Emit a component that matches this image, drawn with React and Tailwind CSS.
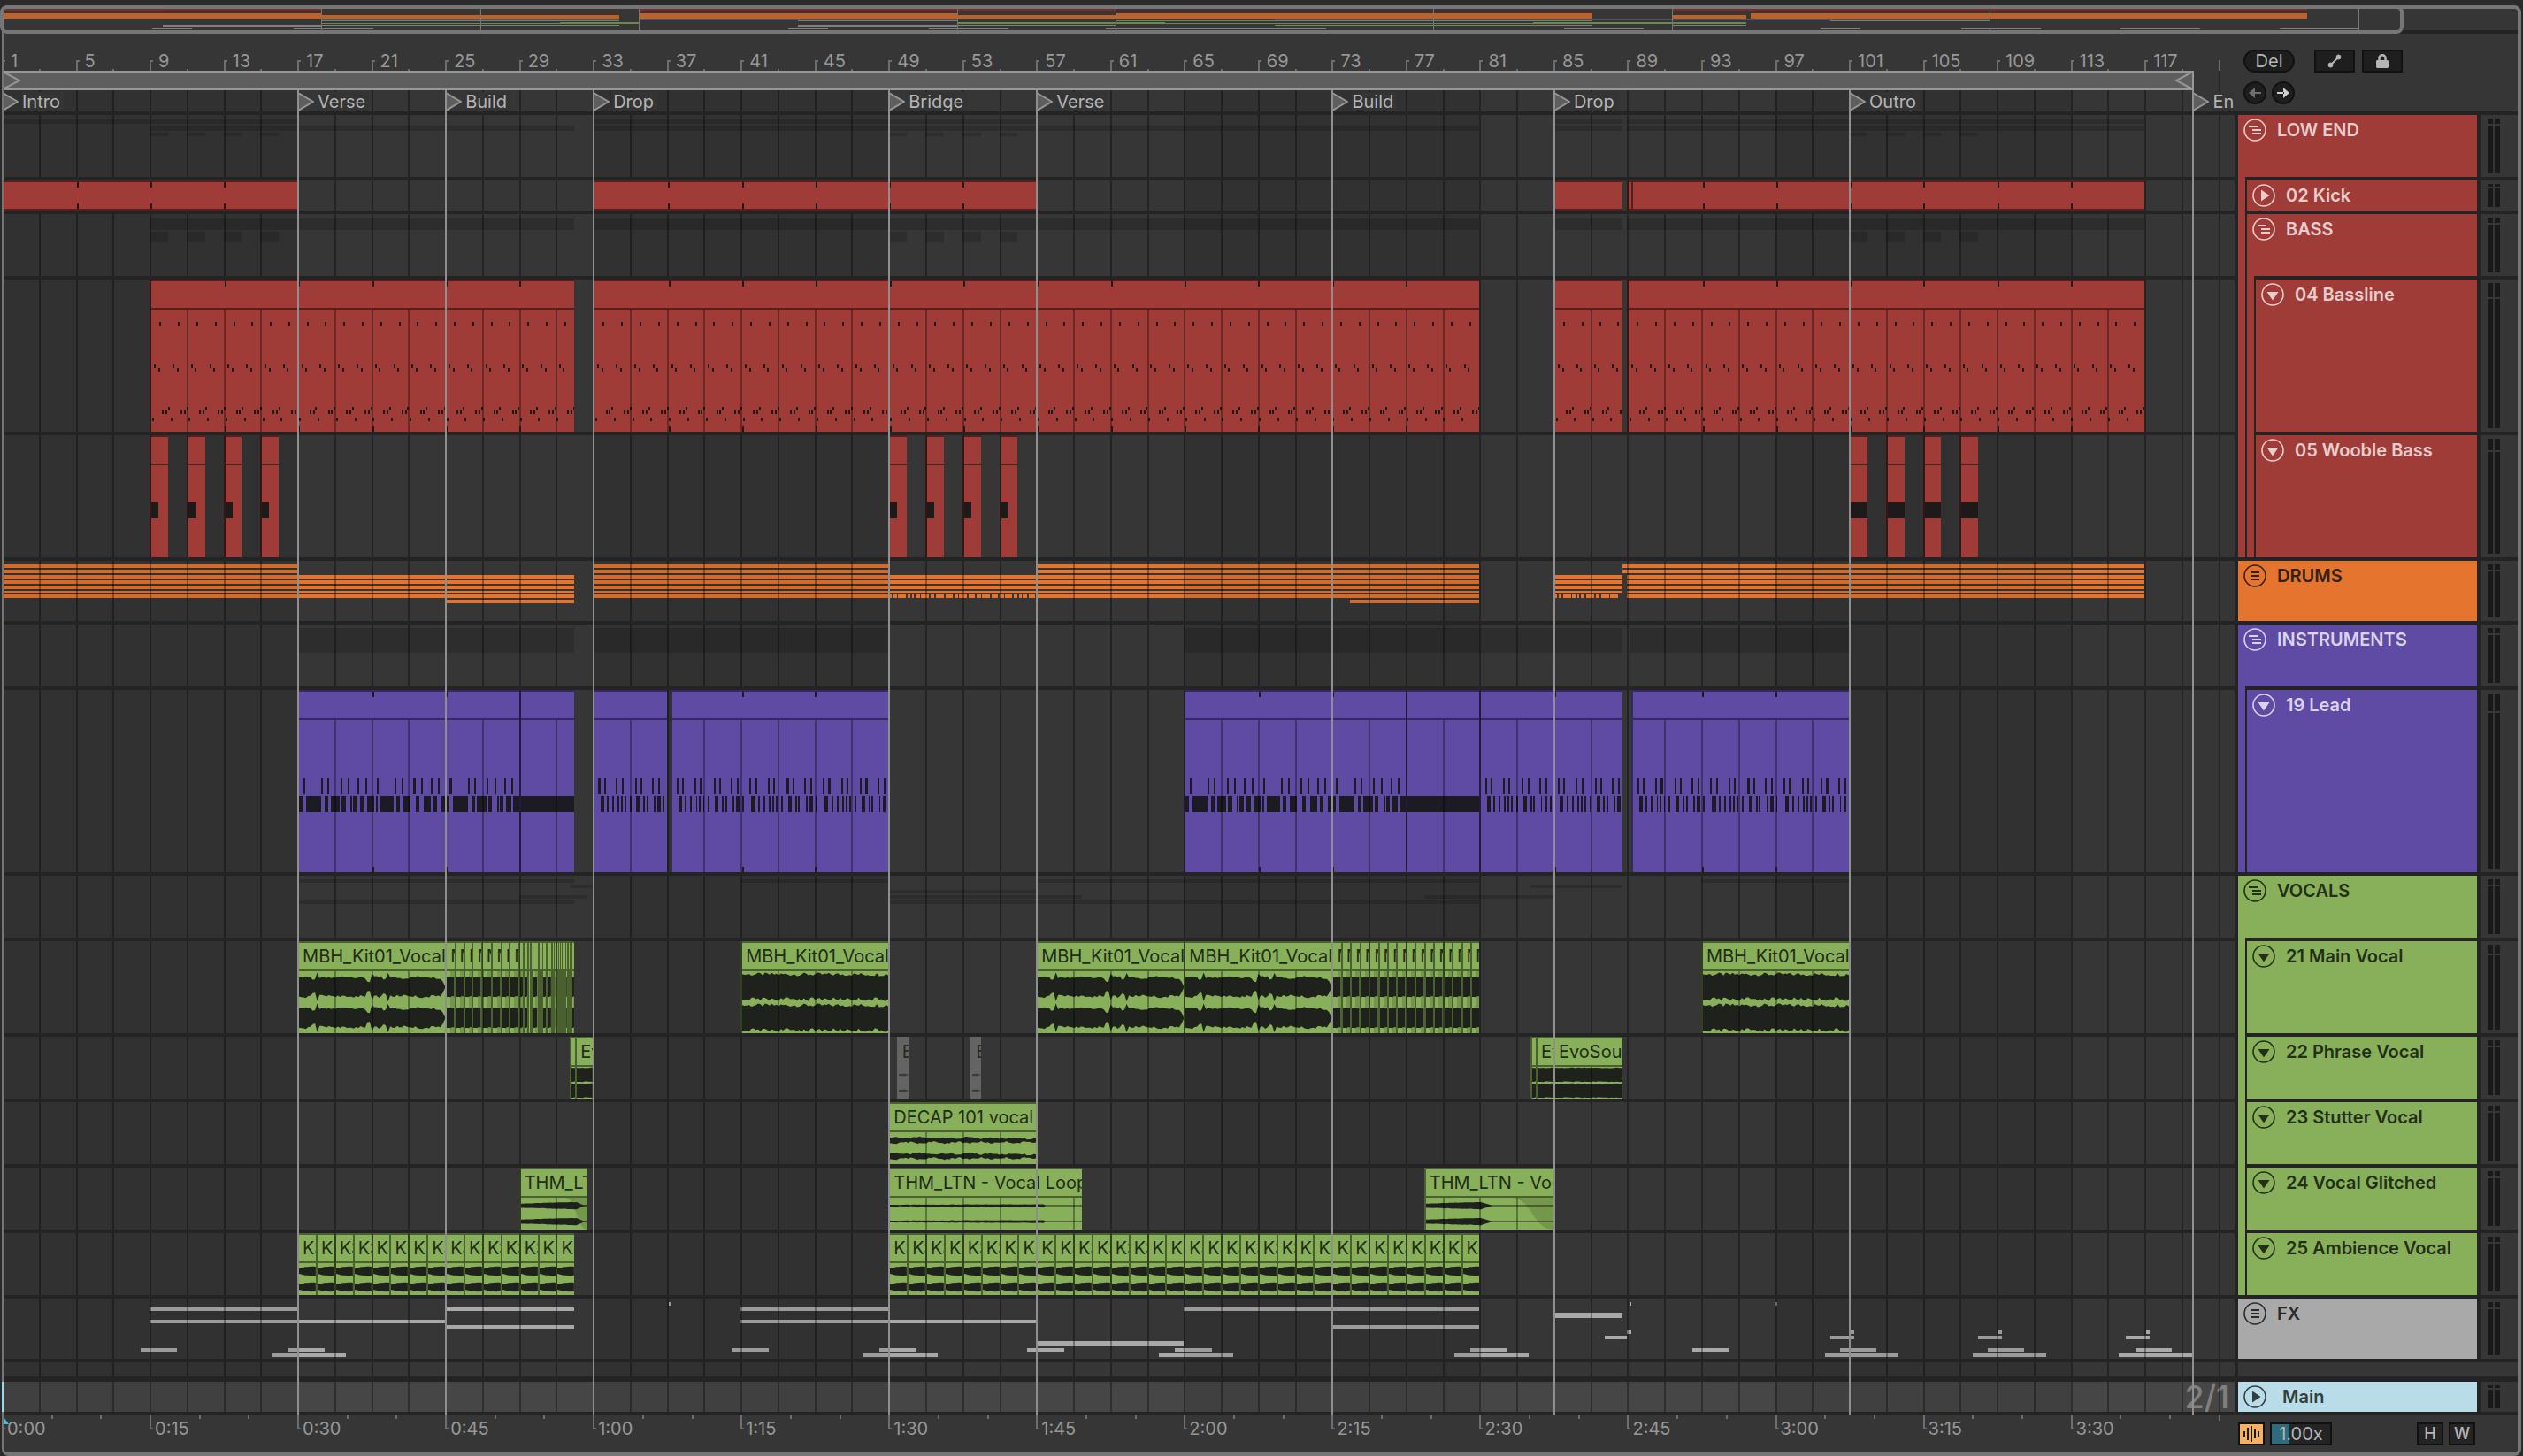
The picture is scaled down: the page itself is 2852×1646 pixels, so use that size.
import React, { useState } from 'react';
import { FaLock } from 'react-icons/fa';

// bars visible in the arrangement and in the overview strip
const BARS = 120.88;
const OVERVIEW_BARS = 126.6;

const LOCATORS = [
  [1, 'Intro'], [17, 'Verse'], [25, 'Build'], [33, 'Drop'], [49, 'Bridge'],
  [57, 'Verse'], [73, 'Build'], [85, 'Drop'], [101, 'Outro'], [119.6, 'End'],
];

const TONES = {
  red: { head: 'bg-[#a03c38] text-[#e8cdcc]', strip: 'bg-[#a03c38]', clip: 'bg-[#a03c38] border-[#54201f]', ink: '#1f1a1a' },
  orange: { head: 'bg-[#e5752e] text-[#33210f]', strip: 'bg-[#e5752e]', clip: 'bg-[#e5752e]', ink: '#1f1a1a' },
  purple: { head: 'bg-[#5f4ba4] text-[#d9d4ea]', strip: 'bg-[#5f4ba4]', clip: 'bg-[#5f4ba4] border-[#35295f]', ink: '#1c1a22' },
  green: { head: 'bg-[#88b05a] text-[#232f17]', strip: 'bg-[#88b05a]', clip: 'bg-[#88b05a] border-[#4a602e]', ink: '#1f211c' },
  gray: { head: 'bg-[#a9a9a9] text-[#2b2b2b]', strip: 'bg-[#a9a9a9]', clip: 'bg-[#646464] border-[#646464]', ink: '#3c3c3c' },
  main: { head: 'bg-[#b8dde8] text-[#333d40]', strip: '', clip: '', ink: '' },
};

const BASS = [[9, 32], [33, 81], [85, 88.75], [89, 117]];
const KICK = [[1, 17], [33, 57], [85, 88.75], [89, 117]];
const KICK_CLIPS = [[1, 17], [33, 57], [85, 88.75], [89, 89.2], [89.2, 117]];
const WOOBLE = [9, 11, 13, 15, 49, 51, 53, 55, 101, 103, 105, 107].map((b) => [b, b + 1]);
const LEAD = [[17, 29], [29, 32], [33, 37], [37.2, 49], [65, 77], [77, 81], [81, 88.75], [89.2, 101]];
const SLICES_A = [
  25, 25.5, 26, 26.45, 26.95, 27.5, 28, 28.45, 28.95, 29.2, 29.47, 29.57, 29.7, 30, 30.1, 30.2, 30.47,
  30.75, 30.85, 30.96, 31.07, 31.17, 31.27, 31.37, 31.47, 31.6, 31.7, 31.8, 32,
];
const SLICES_B = Array.from({ length: 17 }, (_, i) => 73 + i / 2);
const RUNS = [[1, 32], [33, 81], [85, 88.75], [89, 117]];

const pairs = (edges) => edges.slice(0, -1).map((e, i) => [e, edges[i + 1]]);
const range = (from, to) => Array.from({ length: to - from }, (_, i) => [from + i, from + i + 1]);
const bands = (top, height, spans) => spans.map(([a, b]) => ({ a, b, top, height }));

const dashes = (from, to) => {
  const gaps = [0.2, 0.45, 0.95, 1.2, 1.4, 1.7, 2.2, 2.5, 3, 3.5, 3.75, 4.25, 4.7, 5, 5.5, 5.95, 6.25, 6.7, 7, 7.2, 7.5, 7.95];
  let at = 0;
  const out = [];
  gaps.forEach((g) => {
    if (from + g < to) out.push([from + at, from + g]);
    at = g + 0.08;
  });
  if (from + at < to) out.push([from + at, to]);
  return out;
};

const TRACKS = [
  {
    name: 'LOW END', tone: 'red', kind: 'group', depth: 0, h: 'h-[70px]', shade: true,
    bands: [...bands(4, 6, KICK), ...bands(12, 6, BASS), ...bands(20, 4, WOOBLE)],
  },
  { name: '02 Kick', tone: 'red', kind: 'closed', depth: 1, h: 'h-[34px]', clips: KICK_CLIPS.map(([a, b]) => ({ a, b, flat: true })) },
  { name: 'BASS', tone: 'red', kind: 'group', depth: 1, h: 'h-[70px]', shade: true, bands: [...bands(4, 14, BASS), ...bands(20, 12, WOOBLE)] },
  { name: '04 Bassline', tone: 'red', kind: 'open', depth: 2, h: 'h-[172px]', clips: BASS.map(([a, b]) => ({ a, b, notes: 'bass', ticks: true })) },
  { name: '05 Wooble Bass', tone: 'red', kind: 'open', depth: 2, h: 'h-[138px]', clips: WOOBLE.map(([a, b]) => ({ a, b, notes: 'wooble' })) },
  {
    name: 'DRUMS', tone: 'orange', kind: 'list', depth: 0, h: 'h-[68px]',
    bands: [
      ...[4, 10].flatMap((y) => bands(y, 4, [[1, 17], [33, 49], [57, 81], [88.75, 117]])),
      ...[16, 22, 28].flatMap((y) => bands(y, 4, RUNS)),
      ...bands(34, 2, RUNS),
      ...bands(38, 4, [[1, 32], [33, 49], ...dashes(49, 57), [57, 81], ...dashes(85, 88.75), [89, 117]]),
      ...bands(44, 4, [[25, 32], [74, 81]]),
    ],
  },
  { name: 'INSTRUMENTS', tone: 'purple', kind: 'group', depth: 0, h: 'h-[70px]', shade: true, bands: bands(4, 28, [[17, 32], [33, 49], [65, 88.75], [89.1, 101]]) },
  { name: '19 Lead', tone: 'purple', kind: 'open', depth: 1, h: 'h-[206px]', clips: LEAD.map(([a, b]) => ({ a, b, notes: 'lead', ticks: true })) },
  {
    name: 'VOCALS', tone: 'green', kind: 'group', depth: 0, h: 'h-[70px]', shade: true,
    bands: [
      ...bands(4, 4, [[17, 32], [41, 49], [57, 81], [93, 101]]),
      ...bands(10, 4, [[31.75, 33], [83.75, 88.75]]),
      ...bands(16, 4, [[49, 57]]),
      ...bands(22, 4, [[29, 32.7], [49, 59.5], [78, 85]]),
      ...bands(28, 4, [[17, 32], [49, 81]]),
    ],
  },
  {
    name: '21 Main Vocal', tone: 'green', kind: 'open', depth: 1, h: 'h-[104px]',
    clips: [
      ...[[17, 25], [57, 65], [65, 73]].map(([a, b]) => ({ a, b, title: 'MBH_Kit01_Vocal', wave: 'vox' })),
      ...[[41, 49], [93, 101]].map(([a, b]) => ({ a, b, title: 'MBH_Kit01_Vocal', wave: 'dense' })),
      ...pairs(SLICES_A).map(([a, b]) => ({ a, b, title: b - a > 0.4 ? 'M' : '', wave: 'slice', fade: true })),
      ...pairs(SLICES_B).map(([a, b]) => ({ a, b, title: 'M', wave: 'slice', fade: true })),
    ],
  },
  {
    name: '22 Phrase Vocal', tone: 'green', kind: 'open', depth: 1, h: 'h-[70px]',
    clips: [
      { a: 31.75, b: 32.05, wave: 'packed' }, { a: 32.05, b: 33, title: 'Ev', wave: 'packed' },
      { a: 49.45, b: 50.1, title: 'E', wave: 'thin', muted: true }, { a: 53.45, b: 54, title: 'E', wave: 'thin', muted: true },
      { a: 83.75, b: 84.05, wave: 'packed' }, { a: 84.05, b: 85, title: 'Ev', wave: 'packed' },
      { a: 85, b: 88.75, title: 'EvoSou', wave: 'packed' },
    ],
  },
  { name: '23 Stutter Vocal', tone: 'green', kind: 'open', depth: 1, h: 'h-[70px]', clips: [{ a: 49, b: 57, title: 'DECAP 101 vocal', wave: 'loop' }] },
  {
    name: '24 Vocal Glitched', tone: 'green', kind: 'open', depth: 1, h: 'h-[70px]',
    clips: [
      { a: 29, b: 32.7, title: 'THM_LTN', wave: 'swell', tail: true },
      { a: 49, b: 59.5, title: 'THM_LTN - Vocal Loop', wave: 'thin' },
      { a: 78, b: 85, title: 'THM_LTN - Vocal', wave: 'short', tail: true },
    ],
  },
  {
    name: '25 Ambience Vocal', tone: 'green', kind: 'open', depth: 1, h: 'h-[70px]',
    clips: [...range(17, 32), ...range(49, 81)].map(([a, b]) => ({ a, b, title: 'KS', wave: 'blob' })),
  },
  {
    name: 'FX', tone: 'gray', kind: 'list', depth: 0, h: 'h-[68px]',
    bands: [
      ...bands(4, 4, [[37.1, 37.2], [89.1, 89.2], [97, 97.1]]),
      ...bands(10, 4, [[9, 17], [25, 32], [41, 49], [65, 81]]),
      ...bands(16, 6, [[85, 88.75]]),
      ...bands(24, 4, [[9, 25], [41, 57]]),
      ...bands(30, 4, [[25, 32], [73, 81]]),
      ...bands(36, 4, [[89, 89.2], [101.1, 101.3], [109.1, 109.3], [117.1, 117.3]]),
      ...bands(42, 4, [[87.8, 89], [100, 101.3], [108, 109.3], [116, 117.3]]),
      ...bands(48, 6, [[57, 65]]),
      ...bands(56, 4, [8.5, 16.5, 40.5, 48.5, 56.5, 64.5, 80.5, 92.5, 100.5, 108.5, 116.5].map((b) => [b, b + 2])),
      ...bands(62, 4, [15.65, 47.65, 63.65, 79.65, 99.7, 107.7, 115.6].map((b) => [b, b + 4])),
    ],
  },
];

const at = (bar) => `${((bar - 1) / BARS) * 100}%`;
const wide = (a, b) => `${((b - a) / BARS) * 100}%`;
const over = (bar) => `${((bar - 1) / OVERVIEW_BARS) * 100}%`;
const noise = (n) => {
  const s = Math.sin(n * 12.9898) * 43758.5453;
  return s - Math.floor(s);
};

// envelope of each kind of recording, t runs from 0 to 1 over the clip
const ENVELOPES = {
  vox: (t, i) => {
    const peak = [0.12, 0.5, 0.61].some((d) => Math.abs(t - d) < 0.008) ? 0.24 : 0;
    const dip = [0.1, 0.48, 0.59].some((d) => Math.abs(t - d) < 0.012) ? 0.22 : 0;
    return 0.53 + peak - dip + noise(i) * 0.16 + Math.sin(t * 24) * 0.05 - (t > 0.97 ? (t - 0.97) * 16 : 0);
  },
  dense: (t, i) => 0.68 + noise(i) * 0.24,
  packed: (t, i) => 0.82 + noise(i) * 0.1,
  slice: (t, i) => 0.6 + noise(i) * 0.08,
  loop: (t, i) => 0.22 + noise(i) * 0.2 + Math.sin(t * 38) * 0.08 - t * 0.06,
  thin: (t, i) => (t < 0.8 ? 0.08 + t * 0.08 + noise(i) * 0.05 : 0.06),
  swell: (t, i) => (t < 0.84 ? 0.22 + t * 0.26 + noise(i) * 0.06 : Math.max(0.08, 0.45 - (t - 0.84) * 4)),
  short: (t, i) => (t < 0.44 ? 0.22 + t * 0.5 + noise(i) * 0.06 : Math.max(0.06, 0.4 - (t - 0.44) * 5)),
  blob: (t, i) => 0.3 + Math.sin(Math.min(t * 2.2, 2.2)) * 0.26 + noise(i) * 0.04,
};

function Wave({ kind, bars, ink }) {
  const n = Math.max(6, Math.round(bars * 8));
  const env = ENVELOPES[kind];
  const channel = (mid) => {
    const up = [];
    const down = [];
    for (let i = 0; i <= n; i++) {
      up.push(`${i},${(mid - env(i / n, i + 3) * 25).toFixed(1)}`);
      down.unshift(`${i},${(mid + env(i / n, i + 93) * 25).toFixed(1)}`);
    }
    return `M${up.join('L')}L${down.join('L')}Z`;
  };
  return (
    <svg className="absolute inset-0 h-full w-full" viewBox={`0 0 ${n} 100`} preserveAspectRatio="none" fill={ink}>
      <path d={channel(25)} />
      <path d={channel(75)} />
    </svg>
  );
}

const LEAD_A = {
  top: [[0.23, 0.1], [1.2, 0.1], [1.55, 0.1], [2.25, 0.1], [2.65, 0.1], [3.2, 0.1], [3.6, 0.1], [4.25, 0.1], [5.2, 0.1], [5.6, 0.1], [6.25, 0.1], [6.65, 0.1], [7.2, 0.1], [7.6, 0.1]],
  low: [[0, 0.2], [0.4, 0.8], [1.4, 0.2], [1.72, 0.5], [2.32, 0.22], [2.8, 0.1], [2.95, 0.22], [3.32, 0.25], [3.7, 0.4], [4.18, 0.1], [4.42, 0.76], [5.3, 0.2], [5.7, 0.38], [6.35, 0.2], [6.82, 0.38], [7.32, 0.2], [7.78, 0.22]],
};
const LEAD_B = {
  top: [[0.22, 0.1], [0.52, 0.1], [1.2, 0.1], [1.52, 0.1], [2.25, 0.1], [2.55, 0.1], [3.2, 0.1], [3.52, 0.1]],
  low: [[0.32, 0.2], [0.7, 0.09], [0.98, 0.1], [1.28, 0.09], [1.47, 0.09], [1.67, 0.09], [1.95, 0.1], [2.33, 0.2], [2.7, 0.09], [2.88, 0.09], [3.28, 0.09], [3.48, 0.18], [3.8, 0.09]],
};

function Notes({ kind, a, b, ink }) {
  const len = b - a;
  const pc = (v) => `${(v / len) * 100}%`;
  const rects = [];
  const put = (x, y, w, h) => {
    if (x < len) rects.push([x, y, w, h]);
  };
  if (kind === 'bass') {
    for (let i = 0; i < len; i++) {
      [[0.45, 14], [0.16, 62], [0.38, 66], [0.6, 114], [0.78, 114], [0.92, 110], [0.04, 122]].forEach(([x, y]) => put(i + x, y, 0, 4));
    }
  } else if (kind === 'wooble') {
    put(0, 42, a > 100 ? 1 : 0.42, 18);
  } else if (len === 3 || (a === 77 && b === 81)) {
    put(0, 86, len, 18);
  } else {
    const even = a === 17 || a === 65;
    const set = even ? LEAD_A : LEAD_B;
    const step = even ? 8 : 4;
    for (let i = 0; i < len; i += step) {
      set.top.forEach(([x, w]) => put(i + x, 66, w, 18));
      set.low.forEach(([x, w]) => put(i + x, 86, w, 18));
    }
  }
  return (
    <svg className="absolute inset-0 h-full w-full" fill={ink} shapeRendering="crispEdges">
      {rects.map(([x, y, w, h], i) => (
        <rect key={i} x={pc(x)} y={y} width={w ? pc(w) : 2} height={h} />
      ))}
    </svg>
  );
}

function Clip({ clip, tone }) {
  const t = clip.muted ? TONES.gray : TONES[tone];
  const { a, b } = clip;
  const marks = [];
  for (let m = Math.ceil((a + 0.5 - 1) / 4) * 4 + 1; m < b; m += 4) marks.push(m);
  const tick = (edge) => marks.map((m) => (
    <div key={edge + m} className={`absolute z-20 h-1.5 w-0.5 bg-[#1f1a1a] ${edge}`} style={{ left: `${((m - a) / (b - a)) * 100}%` }} />
  ));
  return (
    <div className={`absolute inset-y-0 flex flex-col overflow-hidden border-l-2 ${t.clip}`} style={{ left: at(a), width: wide(a, b) }}>
      <div className={`relative z-20 h-[34px] shrink-0 overflow-hidden border-y-2 pl-1 text-xl leading-[30px] whitespace-nowrap text-[#222c17] ${t.clip}`}>
        {clip.title}
        {(clip.flat || clip.ticks) && tick('top-0')}
        {clip.flat && tick('bottom-0')}
      </div>
      {!clip.flat && (
        <div className="relative flex-1">
          {clip.notes && <Notes kind={clip.notes} a={a} b={b} ink={t.ink} />}
          {clip.fade && <div className="absolute inset-y-0 right-0 w-1/2 bg-black/15" />}
          {clip.tail && (
            <svg className="absolute inset-y-0 right-0 h-full w-1/3" viewBox="0 0 100 100" preserveAspectRatio="none" fill="#73974b">
              <path d="M0 0C50 0 50 100 100 100V0Z" />
            </svg>
          )}
          {clip.wave && <Wave kind={clip.wave} bars={b - a} ink={t.ink} />}
          {clip.ticks && tick('bottom-0')}
        </div>
      )}
    </div>
  );
}

const GRID = Array.from({ length: 60 }, (_, i) => 3 + i * 2);

function Grid() {
  return GRID.map((b) => (
    <div key={b} className="absolute inset-y-0 z-10 w-0.5 bg-black/33" style={{ left: at(b) }} />
  ));
}

function Shades() {
  return [1, 33, 65, 97].map((b) => (
    <div key={b} className="absolute inset-y-0 bg-black/8" style={{ left: at(b), width: wide(0, 16) }} />
  ));
}

function Lane({ track }) {
  const paint = track.shade ? 'bg-black/15' : TONES[track.tone].strip;
  return (
    <div className="relative h-full min-w-0 flex-1 overflow-hidden bg-[#363636]">
      <div className="absolute inset-y-0 right-0 -left-0.5">
        {track.bands?.map((s, i) => (
          <div key={i} className={`absolute ${paint}`} style={{ left: at(s.a), width: wide(s.a, s.b), top: s.top, height: s.height }} />
        ))}
        <Shades />
        {track.clips?.map((c, i) => <Clip key={i} clip={c} tone={track.tone} />)}
        <Grid />
      </div>
    </div>
  );
}

const FOLDS = {
  group: 'M6 9h10M10 13h10M10 17h10',
  list: 'M8 9h10M8 13h10M8 17h10',
};

function FoldIcon({ kind }) {
  return (
    <svg className="size-[26px]" viewBox="0 0 26 26" fill="none" stroke="currentColor">
      <circle cx="13" cy="13" r="12" strokeWidth="1.6" />
      {FOLDS[kind] && <path d={FOLDS[kind]} strokeWidth="2" />}
      {kind === 'open' && <path d="M6.5 10h13L13 19.500z" fill="currentColor" stroke="none" />}
      {kind === 'closed' && <path d="M10 6.500v13L19.500 13z" fill="currentColor" stroke="none" />}
    </svg>
  );
}

function Meter() {
  return (
    <div className="flex h-full w-[42px] gap-0.5 bg-[#363636] py-1 pl-2">
      {[0, 1].map((c) => (
        <div key={c} className="flex w-1.5 flex-col gap-0.5">
          <div className="h-1/10 bg-[#191919]" />
          <div className="flex-1 bg-[#191919]" />
        </div>
      ))}
    </div>
  );
}

function Strips({ count, tone }) {
  return Array.from({ length: count }, (_, i) => (
    <div key={i} className={`h-full w-2.5 shrink-0 border-r-2 border-[#242424] ${TONES[tone].strip}`} />
  ));
}

function Track({ track, next }) {
  const [selected, setSelected] = useState(false);
  const tone = TONES[track.tone];
  return (
    <div>
      <div className={`flex gap-1 ${track.h}`}>
        <Lane track={track} />
        <div className="flex w-[270px]">
          <Strips count={track.depth} tone={track.tone} />
          <div className={`flex flex-1 items-start gap-3 pt-1 pl-1.5 ${tone.head}`}>
            <button aria-label={`Fold ${track.name}`} aria-pressed={selected} onClick={() => setSelected(!selected)}>
              <FoldIcon kind={track.kind} />
            </button>
            <h2 className="text-xl leading-[26px] font-semibold">{track.name}</h2>
          </div>
        </div>
        <Meter />
      </div>
      <div className="flex h-1 justify-end pr-[46px]">
        <div className="flex w-[270px]">
          <Strips count={next ? next.depth : 0} tone={track.tone} />
        </div>
      </div>
    </div>
  );
}

function Overview() {
  const row = (y, h, fill, spans) => spans.map(([a, b]) => (
    <rect key={`${y}${a}`} x={over(a)} y={y} width={`${((b - a) / OVERVIEW_BARS) * 100}%`} height={h} fill={fill} />
  ));
  return (
    <div className="relative h-7">
      <svg className="h-6 w-full" shapeRendering="crispEdges">
        {row(0, 3, '#6b3130', [[1, 17], [33, 57], [85, 117]])}
        {row(2, 1, '#8a3836', BASS)}
        {row(5, 6, '#bd632a', [[1, 17], [33, 49], [57, 81], [89, 117]])}
        {row(7, 4, '#bd632a', [[17, 32], [49, 57], [85, 88.75]])}
        {row(12, 1, '#504a80', [[17, 32], [33, 49], [65, 101]])}
        {row(13, 1, '#6b8a4a', [[17, 32], [41, 49], [57, 81], [93, 101]])}
        {row(15, 2, '#6b8a4a', [[29, 33], [49, 59.5], [78, 88.75]])}
        {row(16, 1, '#6b8a4a', [[17, 32], [49, 81]])}
        {row(18, 2, '#808080', [[9, 17], [41, 49]])}
        {row(18, 1, '#808080', [[17, 32], [49, 57], [65, 81], [85, 88.75]])}
        {row(20, 1, '#808080', [[25, 32], [73, 81]])}
        {row(22, 1, '#808080', [[8.5, 10.5], [15.6, 19.6], [40.5, 42.5], [47.6, 51.6], [56.5, 67.6], [79.6, 83.6], [92.5, 94.5], [99.6, 103.6], [107.6, 111.6], [115.6, 119.6]])}
        {LOCATORS.slice(1).map(([b]) => <rect key={b} x={over(b)} y="0" width="1" height="24" fill="#767676" />)}
      </svg>
      <div className="absolute inset-x-0 bottom-0 h-1 bg-[#242424]" />
      {/* the part of the set that the arrangement shows */}
      <div className="absolute -top-1 bottom-0 -left-1 w-[95.6%] rounded-lg border-4 border-[#767676]" />
    </div>
  );
}

const BAR_LABELS = Array.from({ length: 30 }, (_, i) => 1 + i * 4);
const TIMES = Array.from({ length: 15 }, (_, i) => [1 + i * 8, `${Math.floor(i / 4)}:${String((i % 4) * 15).padStart(2, '0')}`]);

function BarRuler() {
  return (
    <div className="relative h-[42px] overflow-hidden text-[#979797]">
      <div className="absolute inset-y-0 right-0 -left-0.5">
        {BAR_LABELS.map((b) => (
          <React.Fragment key={b}>
            <div className="absolute bottom-0 h-3 w-1 border-t-2 border-l-2 border-[#6e6e6e]" style={{ left: at(b) }} />
            <span className="absolute bottom-0 pl-2.5 text-xl leading-[22px]" style={{ left: at(b) }}>{b}</span>
            <div className="absolute bottom-0 h-0.5 w-0.5 bg-[#6e6e6e]" style={{ left: at(b + 2) }} />
          </React.Fragment>
        ))}
        <div className="absolute bottom-0 h-3 w-0.5 bg-[#6e6e6e]" style={{ left: at(121) }} />
      </div>
    </div>
  );
}

function LoopBar() {
  return (
    <div className="relative h-[22px] overflow-hidden">
      <div className="absolute inset-y-0 right-0 -left-0.5">
        <div className="absolute inset-y-0 w-0.5 bg-black/33" style={{ left: at(121) }} />
        <div className="absolute inset-y-0 left-0 flex justify-between border-2 border-[#979797] bg-[#5e5e5e]" style={{ width: wide(1, 119.7) }}>
          <svg className="h-[18px] w-5" viewBox="0 0 20 18" fill="none" stroke="#979797" strokeWidth="2">
            <path d="M1 0L18 9L1 18" />
          </svg>
          <svg className="h-[18px] w-5" viewBox="0 0 20 18" fill="none" stroke="#979797" strokeWidth="2">
            <path d="M19 0L2 9L19 18" />
          </svg>
        </div>
      </div>
    </div>
  );
}

function LocatorRow() {
  return (
    <div className="relative h-6 overflow-hidden">
      <div className="absolute inset-y-0 right-0 -left-0.5">
        <Shades />
        <Grid />
        {LOCATORS.map(([b, name]) => (
          <button key={b} className="absolute top-0.5 z-20 flex items-center gap-1 text-xl leading-[22px] whitespace-nowrap text-[#b5b5b5]" style={{ left: at(b) }}>
            <svg className="h-[22px] w-[19px]" viewBox="0 0 19 22" fill="#5e5e5e" stroke="#979797" strokeWidth="2">
              <path d="M1 1L18 11L1 21z" />
            </svg>
            <span className="bg-[#343434] pr-1">{name}</span>
          </button>
        ))}
      </div>
    </div>
  );
}

function TimeRuler() {
  return (
    <div className="relative h-[42px] min-w-0 flex-1 overflow-hidden text-xl leading-[30px] text-[#979797]">
      <div className="absolute inset-y-0 right-0 -left-0.5">
        {TIMES.map(([b, label]) => (
          <React.Fragment key={b}>
            <div className="absolute top-0 h-4 w-1 border-b-2 border-l-2 border-[#6e6e6e]" style={{ left: at(b) }} />
            <span className="absolute top-0 pl-1.5" style={{ left: at(b) }}>{label}</span>
            <div className="absolute top-0 h-1 w-0.5 bg-[#6e6e6e]" style={{ left: at(b + 8 / 3) }} />
            <div className="absolute top-0 h-1 w-0.5 bg-[#6e6e6e]" style={{ left: at(b + 16 / 3) }} />
          </React.Fragment>
        ))}
        <div className="absolute top-0 h-1.5 w-0.5 bg-[#6e6e6e]" style={{ left: at(121) }} />
        <svg className="absolute top-0.5 left-0.5 h-2 w-1.5" viewBox="0 0 6 8" fill="#52bcd0"><path d="M0 0L6 8H0z" /></svg>
      </div>
    </div>
  );
}

function Controls() {
  const square = 'grid h-[26px] w-[46px] place-items-center border-2 border-[#111] bg-[#1e1e1e] text-[#b5b5b5]';
  const round = 'grid size-[26px] place-items-center rounded-full border-2 border-[#111] bg-[#1e1e1e]';
  return (
    <div className="flex w-80 flex-col gap-2.5 pt-[18px] pl-2.5">
      <div className="flex">
        <button className="h-[26px] w-[58px] rounded-full border-2 border-[#111] bg-[#1e1e1e] text-xl leading-[22px] text-[#b5b5b5]">Del</button>
        <button className={`ml-[22px] ${square}`} aria-label="Automation mode">
          <svg className="size-4" viewBox="0 0 16 16" fill="currentColor" stroke="currentColor">
            <path d="M3 13L13 3" strokeWidth="2" />
            <circle cx="3.500" cy="12.500" r="2.500" />
            <circle cx="12.500" cy="3.500" r="2.500" />
          </svg>
        </button>
        <button className={`ml-2 ${square}`} aria-label="Lock envelopes"><FaLock className="size-4" /></button>
      </div>
      <div className="flex gap-1.5">
        <button className={`${round} text-[#6e6e6e]`} aria-label="Previous locator">
          <svg className="h-3 w-4" viewBox="0 0 16 12" fill="currentColor"><path d="M8 0V12L1 6zM7 5h8v2H7z" /></svg>
        </button>
        <button className={`${round} text-[#d0d0d0]`} aria-label="Next locator">
          <svg className="h-3 w-4" viewBox="0 0 16 12" fill="currentColor"><path d="M8 0V12L15 6zM1 5h8v2H1z" /></svg>
        </button>
      </div>
    </div>
  );
}

function Footer() {
  const [rate, setRate] = useState('1.00x');
  const key = 'h-[26px] w-[30px] border-2 border-[#111] bg-[#242424] text-lg leading-[22px] font-medium text-[#b5b5b5]';
  return (
    <div className="flex w-80 items-start pt-2 pl-1">
      <button className="grid h-[26px] w-[30px] place-items-center border-2 border-[#111] bg-[#f4b065]" aria-label="Warp">
        <svg className="h-[18px] w-5" viewBox="0 0 20 18" stroke="#1a1a1a" strokeWidth="2"><path d="M2 6v6M6 2v14M10 0v18M14 4v10M18 6v6" /></svg>
      </button>
      <input
        aria-label="Playback rate"
        value={rate}
        onChange={(e) => setRate(e.target.value)}
        className="ml-1.5 h-[26px] w-[70px] border-2 border-[#111] bg-[#242424] bg-linear-to-r from-[#2f6b7c] from-30% to-transparent to-30% text-center text-xl leading-[22px] text-[#b5b5b5] outline-none"
      />
      <button className={`ml-24 ${key}`}>H</button>
      <button className={`ml-1.5 ${key}`}>W</button>
    </div>
  );
}

export default function App() {
  return (
    <div className="min-h-screen bg-[#2a2a2a] pt-1.5 pr-0.5 pl-0.5 font-[Inter,sans-serif]">
      <div className="rounded-lg border-4 border-l-2 border-[#767676] bg-[#363636]">
        <Overview />
        <div className="flex h-[88px]">
          <div className="min-w-0 flex-1">
            <BarRuler />
            <LoopBar />
            <LocatorRow />
          </div>
          <Controls />
        </div>

        <main className="relative bg-[#242424] pt-1">
          {TRACKS.map((t, i) => <Track key={t.name} track={t} next={TRACKS[i + 1]} />)}

          <div className="flex h-4 gap-1">
            <Lane track={{ tone: 'gray' }} />
            <div className="w-[316px] bg-[#363636]" />
          </div>

          <div className="mt-1.5 flex h-[34px] gap-1">
            <div className="relative min-w-0 flex-1 overflow-hidden bg-[#464646]">
              <div className="absolute inset-y-0 right-0 -left-0.5">
                <Shades />
                <Grid />
              </div>
              <span className="absolute inset-y-0 right-1.5 text-[36px] leading-[34px] font-medium text-[#808080]">2/1</span>
            </div>
            <div className={`flex w-[270px] items-start gap-[18px] pt-1 pl-1.5 ${TONES.main.head}`}>
              <button aria-label="Fold Main"><FoldIcon kind="closed" /></button>
              <h2 className="text-xl leading-[26px] font-semibold">Main</h2>
            </div>
            <Meter />
          </div>
          <div className="h-1" />

          <div className="pointer-events-none absolute inset-y-0 right-80 -left-0.5 z-30">
            {LOCATORS.slice(1).map(([b]) => (
              <div key={b} className="absolute -top-6 bottom-0 w-0.5 bg-[#8f8f8f]" style={{ left: at(b) }} />
            ))}
            <div className="absolute bottom-1 left-0 h-[34px] w-0.5 bg-[#8fdcea]" />
          </div>
        </main>

        <div className="flex h-[42px]">
          <TimeRuler />
          <Footer />
        </div>
      </div>
    </div>
  );
}
